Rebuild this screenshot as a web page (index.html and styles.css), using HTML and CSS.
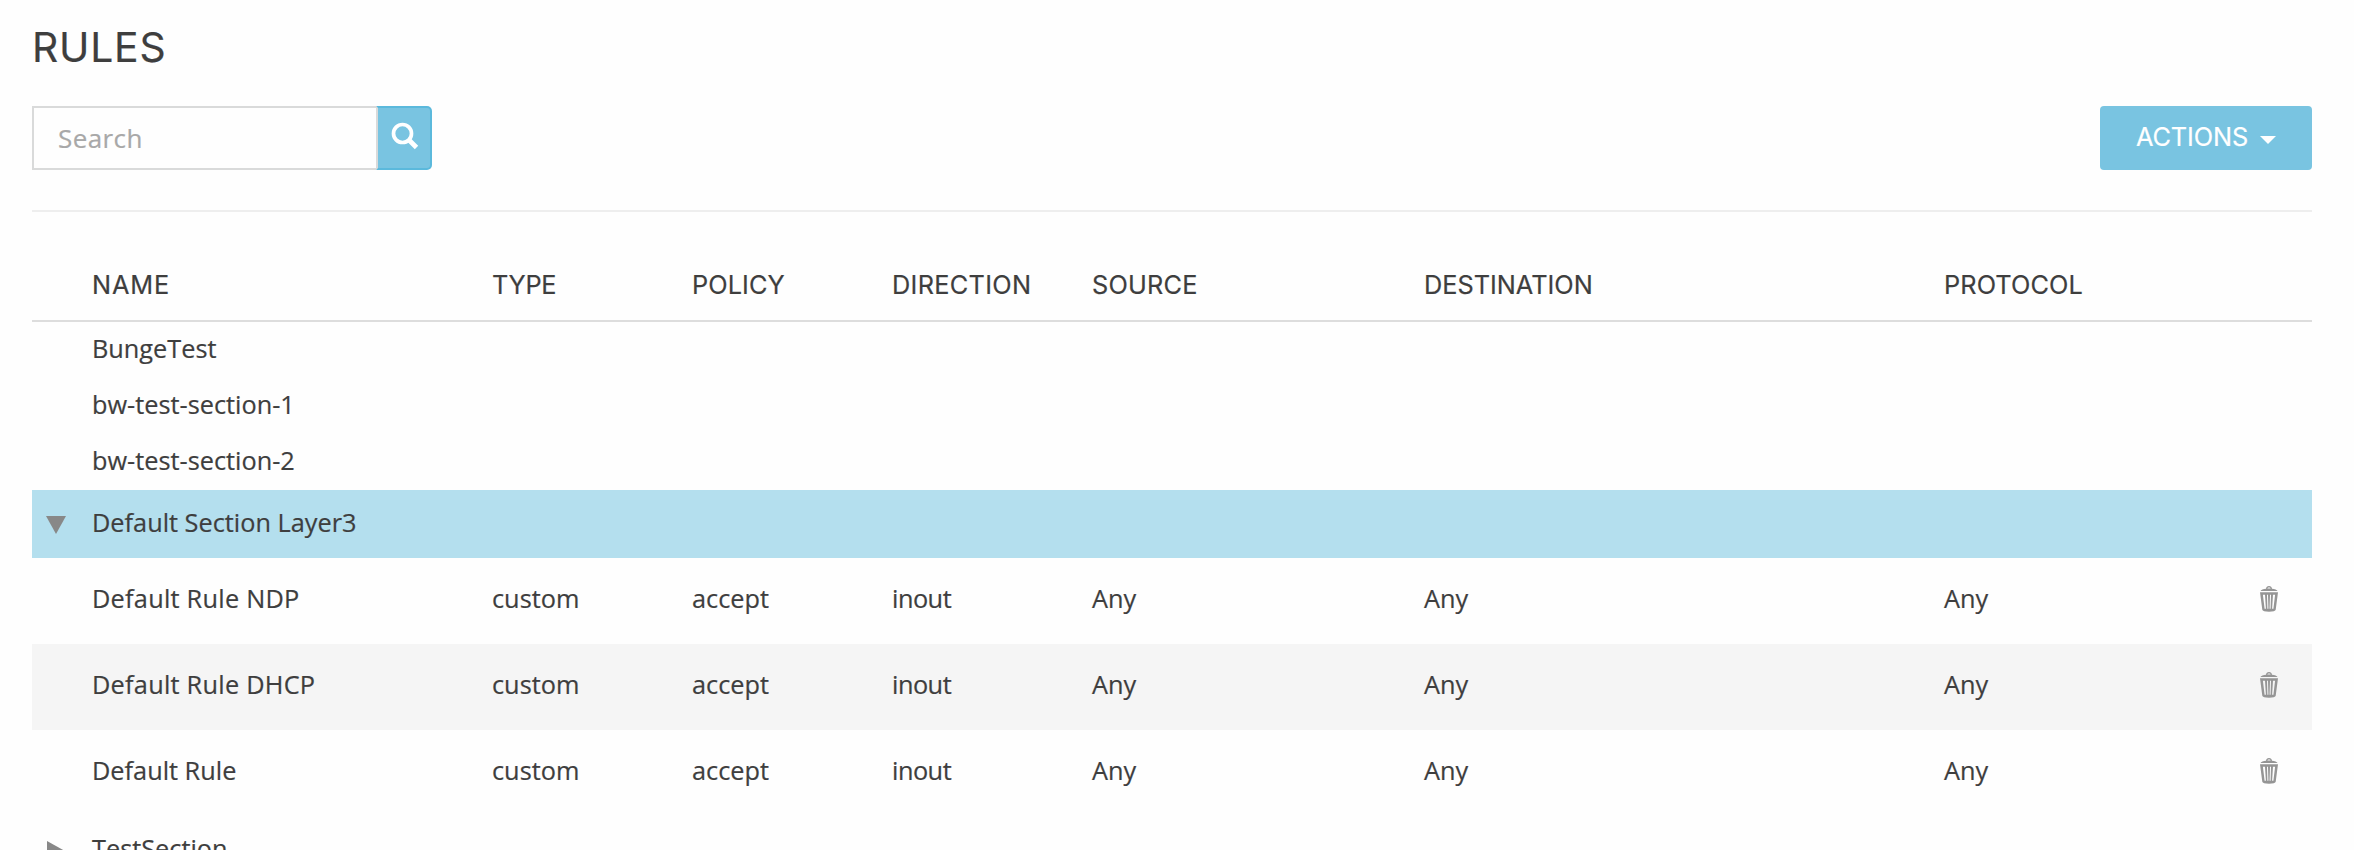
FILE: index.html
```
<!DOCTYPE html>
<html lang="en">
<head>
<meta charset="utf-8">
<title>Rules</title>
<link rel="stylesheet" href="styles.css">
</head>
<body>
<svg class="defs" aria-hidden="true">
  <symbol id="trash" viewBox="0 0 18 26">
    <path d="M.5 4.9C.8 3.9 3.500 3.100 6 2.700C6.300 1 7.200 .1 9 .1s2.700.9 3 2.600c2.500.4 5.200 1.200 5.500 2.200zM7.300 2.600h3.400C10.500 1.800 10 1.400 9 1.400s-1.500.4-1.700 1.200z" fill-rule="evenodd"/>
    <path d="M0 6.300h18l-2.300 17.500c-.2 1.300-2.700 2-6.700 2s-6.500-.7-6.700-2zM2.900 8.700l1.700 14h1.300l-.9-14zM7 8.700l.4 14h1L8 8.700zM10 8.700l-.4 14h1l.4-14zM13 8.700l-.9 14h1.300l1.700-14z" fill-rule="evenodd"/>
  </symbol>
</svg>
<main class="page">
  <h1 class="title">RULES</h1>
  <div class="toolbar">
    <form class="search">
      <input class="search-input" type="text" placeholder="Search" aria-label="Search">
      <button class="search-button" type="button" aria-label="Search">
        <svg class="search-icon" viewBox="0 0 28 28"><circle cx="11.500" cy="11.500" r="9" fill="none" stroke="#fff" stroke-width="3.700"/><path d="M17.500 17.500L25.500 25.500" stroke="#fff" stroke-width="4.800"/></svg>
      </button>
    </form>
    <button class="actions" type="button"><span class="actions-label">ACTIONS</span><span class="caret"></span></button>
  </div>
  <div class="table">
    <div class="row head"><span></span><span class="w-name">NAME</span><span class="w-type">TYPE</span><span class="w-policy">POLICY</span><span class="w-direction">DIRECTION</span><span>SOURCE</span><span class="w-destination">DESTINATION</span><span class="w-protocol">PROTOCOL</span></div>
    <div class="row plain"><span></span><span>BungeTest</span></div>
    <div class="row plain"><span></span><span>bw-test-section-1</span></div>
    <div class="row plain"><span></span><span>bw-test-section-2</span></div>
    <div class="row section open"><span class="arrow-down"></span><span>Default Section Layer3</span></div>
    <div class="row rule"><span></span><span class="loose">Default Rule NDP</span><span>custom</span><span>accept</span><span class="tight">inout</span><span>Any</span><span>Any</span><span>Any</span><svg class="trash"><use href="#trash"/></svg></div>
    <div class="row rule striped"><span></span><span class="loose">Default Rule DHCP</span><span>custom</span><span>accept</span><span class="tight">inout</span><span>Any</span><span>Any</span><span>Any</span><svg class="trash"><use href="#trash"/></svg></div>
    <div class="row rule"><span></span><span>Default Rule</span><span>custom</span><span>accept</span><span class="tight">inout</span><span>Any</span><span>Any</span><span>Any</span><svg class="trash"><use href="#trash"/></svg></div>
    <div class="row section"><span class="arrow-right"></span><span>TestSection</span></div>
  </div>
</main>
</body>
</html>
```

FILE: styles.css
```
* { box-sizing: border-box; }

body {
  margin: 0;
  height: 850px;
  overflow: hidden;
  background: #fefefe;
  color: #3e3e3e;
  font: 25.3px/36px "Open Sans", sans-serif;
  -webkit-text-stroke: 0.2px;
}

.defs { display: none; }

.page { padding: 17px 42px 0 32px; }

.title {
  margin: 0 0 29px;
  font: 400 40.8px/60px Inter, sans-serif;
  letter-spacing: 0.8px;
}

.toolbar {
  display: flex;
  justify-content: space-between;
  height: 106px;
  padding-bottom: 40px;
  border-bottom: 2px solid #eee;
}

.search { display: flex; }

.search-input {
  width: 346px;
  height: 64px;
  padding: 0 24px;
  border: 2px solid #d9dada;
  border-radius: 0;
  background: #fefefe;
  font: 26px/36px "Open Sans", sans-serif;
  letter-spacing: 0.4px;
}

.search-input::placeholder { color: #a8a8a8; opacity: 1; }

.search-button {
  display: flex;
  align-items: center;
  width: 56px;
  height: 64px;
  margin-left: -2px;
  padding: 0 0 4px 13px;
  border: 2px solid #5bb9dc;
  border-left-color: #d9dada;
  border-radius: 0 5px 5px 0;
  background: #79c4e1;
}

.search-icon { flex: none; width: 28px; height: 28px; }

.actions {
  display: flex;
  align-items: center;
  gap: 12px;
  width: 212px;
  height: 64px;
  padding: 0 0 0 36px;
  border: 0;
  border-radius: 4px;
  background: #79c4e1;
  color: #fff;
  font: 25.3px/36px Inter, sans-serif;
  letter-spacing: -0.1px;
}

.actions-label { padding-bottom: 2px; }

.caret {
  margin-top: 4px;
  border: 8px solid transparent;
  border-top-color: #fff;
  border-bottom: 0;
}

.table { padding-top: 38px; }

.row {
  display: grid;
  grid-template-columns: 60px 400px 200px 200px 200px 332px 520px 316px 1fr;
  align-items: center;
  white-space: nowrap;
}

.head {
  height: 72px;
  border-bottom: 2px solid #ddd;
  font-family: Inter, sans-serif;
  letter-spacing: 0.2px;
}

.w-name { letter-spacing: 0.9px; }
.w-type { letter-spacing: -0.3px; }
.w-policy { letter-spacing: 0.1px; }
.w-direction { letter-spacing: 0.3px; }
.w-destination { letter-spacing: 0; }
.w-protocol { letter-spacing: 0.1px; }

.plain { height: 56px; padding-bottom: 4px; }

.section { height: 68px; padding-bottom: 4px; }

.open { background: #b4dfee; }

.rule { height: 86px; padding-bottom: 6px; }

.striped { background: #f5f5f5; }

.loose { letter-spacing: 0.25px; }
.tight { letter-spacing: -0.5px; }

.arrow-down {
  justify-self: start;
  margin: 6px 0 0 14px;
  border: 10px solid transparent;
  border-top: 18px solid #888;
  border-bottom: 0;
}

.arrow-right {
  justify-self: start;
  margin: 6px 0 0 15px;
  border: 10px solid transparent;
  border-left: 18px solid #888;
  border-right: 0;
}

.trash { width: 18px; height: 26px; margin-top: 1px; fill: #959595; }
```
